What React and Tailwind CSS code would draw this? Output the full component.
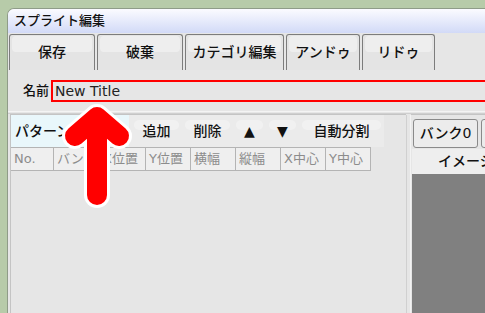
import React from 'react';

// Spritesheet editor window, cropped to the top-left corner.
const FONT = { fontFamily: '"DejaVu Sans", "Noto Sans CJK JP", sans-serif' };

const topButtons = [
  { label: '保存', w: 'w-[86px]' },
  { label: '破棄', w: 'w-[86px]' },
  { label: 'カテゴリ編集', w: 'w-[99px]' },
  { label: 'アンドゥ', w: 'w-[74px]' },
  { label: 'リドゥ', w: 'w-[73px]' },
];

const toolButtons = [
  { label: '追加', w: 'w-[49px]' },
  { label: '削除', w: 'w-[49px]' },
  { label: '▲', w: 'w-[31px]' },
  { label: '▼', w: 'w-[31px]' },
  { label: '自動分割', w: 'w-[83px]' },
];

const columns = [
  { label: 'No.', w: 'w-[43px]' },
  { label: 'バンク', w: 'w-[46px]' },
  { label: 'X位置', w: 'w-[46px]' },
  { label: 'Y位置', w: 'w-[45px]' },
  { label: '横幅', w: 'w-[45px]' },
  { label: '縦幅', w: 'w-[45px]' },
  { label: 'X中心', w: 'w-[45px]' },
  { label: 'Y中心', w: 'w-[45px]' },
];

const Arrow = () => (
  <svg className="absolute left-0 top-0 pointer-events-none" width="485" height="313">
    <g fill="none" stroke="#ffffff" strokeWidth="26" strokeLinecap="round" strokeLinejoin="round">
      <path d="M97 195 V118" />
      <path d="M75 136 L97 117 L119 136" />
    </g>
    <g fill="none" stroke="#ff0000" strokeWidth="20" strokeLinecap="round" strokeLinejoin="round">
      <path d="M97 195 V118" />
      <path d="M75 136 L97 117 L119 136" />
    </g>
  </svg>
);

export default function App() {
  return (
    <div className="relative w-[485px] h-[313px] overflow-hidden bg-[#b7cba9] pt-[8px] pl-[7px]" style={FONT}>
      <div className="w-[560px] h-full flex flex-col bg-[#e6e6e6] border-l border-t border-[#8f9c88] rounded-tl-[7px] overflow-hidden">
        {/* title bar */}
        <div className="h-[24px] shrink-0 flex items-center pl-[6px] bg-gradient-to-b from-[#fbfbff] to-[#d2daf7] text-[13px] font-medium text-[#111]">
          スプライト編集
        </div>

        {/* top buttons */}
        <div className="h-[37px] shrink-0 flex gap-[2px] pl-[1px] pt-[1px]">
          {topButtons.map((b) => (
            <div
              key={b.label}
              className={`${b.w} shrink-0 h-full relative flex items-center justify-center border border-b-0 border-[#7c7c7c] rounded-t-[3px] bg-[#e4e4e4] text-[14px] font-medium text-[#111]`}
            >
              <span className="absolute left-[2px] right-[2px] top-[1px] h-[16px] rounded-[4px] bg-[#eeeeee]" />
              <span className="relative">{b.label}</span>
            </div>
          ))}
        </div>

        {/* name row */}
        <div className="h-[41px] shrink-0 flex items-center gap-[2px] pl-[15px] pt-[1px]">
          <span className="text-[13px] font-medium text-[#111]">名前</span>
          <div className="h-[22px] flex-1 border-2 border-[#ff0000] bg-[#e6e6e6] flex items-center pl-[2px] text-[14px] text-[#222] whitespace-nowrap">
            New Title
          </div>
        </div>
        <div className="h-[3px] shrink-0 border-t border-[#f4f4f4] border-b border-b-[#cfcfcf]" />

        {/* panels */}
        <div className="flex-1 flex min-h-0">
          {/* pattern list */}
          <div className="ml-[2px] w-[396px] shrink-0 flex flex-col border-l border-t border-[#c4c4c4]">
            <div className="h-[32px] shrink-0 flex">
              <div className="w-[118px] shrink-0 h-full bg-[#e9f7fb] flex items-center pl-[4px] text-[14px] font-medium text-[#111]">
                パターン
              </div>
              <div className="flex gap-[2px] pl-[3px] pr-[1px] bg-[#ebebeb] h-full">
                {toolButtons.map((b) => (
                  <div
                    key={b.label}
                    className={`${b.w} shrink-0 h-full relative flex items-center justify-center text-[14px] font-medium text-[#111]`}
                  >
                    <span className="absolute left-[2px] right-[2px] top-[5px] h-[10px] rounded-[5px] bg-[#f1f1f1]" />
                    <span className="relative">{b.label}</span>
                  </div>
                ))}
              </div>
            </div>
            <div className="h-[24px] shrink-0 flex">
              {columns.map((c) => (
                <div
                  key={c.label}
                  className={`${c.w} shrink-0 h-full flex items-center pl-[3px] border-r border-t border-b border-[#b4b4b4] bg-[#efefef] text-[13px] text-[#8c8c8c] whitespace-nowrap overflow-hidden`}
                >
                  {c.label}
                </div>
              ))}
            </div>
            <div className="flex-1 bg-[#e6e6e6]" />
          </div>

          {/* divider */}
          <div className="w-[5px] shrink-0 border-l border-[#d0d0d0] border-r border-r-[#f3f3f3] mt-[1px]" />

          {/* image bank */}
          <div className="flex-1 min-w-0 flex flex-col border-t border-[#c4c4c4] pl-[1px]">
            <div className="h-[34px] shrink-0 flex gap-[3px] pt-[4px] pb-[1px] pl-[1px]">
              <div className="w-[65px] shrink-0 h-full border border-[#8a8a8a] rounded-[3px] bg-[#ececec] flex items-center justify-center text-[14px] font-medium text-[#111]">
                バンク0
              </div>
              <div className="w-[65px] shrink-0 h-full border border-[#8a8a8a] rounded-[3px] bg-[#ececec]" />
            </div>
            <div className="h-[25px] shrink-0 bg-[#eeeeee] flex items-center pl-[26px] text-[14px] font-medium text-[#111] whitespace-nowrap overflow-hidden">
              イメージ
            </div>
            <div className="flex-1 bg-[#808080]" />
          </div>
        </div>
      </div>
      <Arrow />
    </div>
  );
}
